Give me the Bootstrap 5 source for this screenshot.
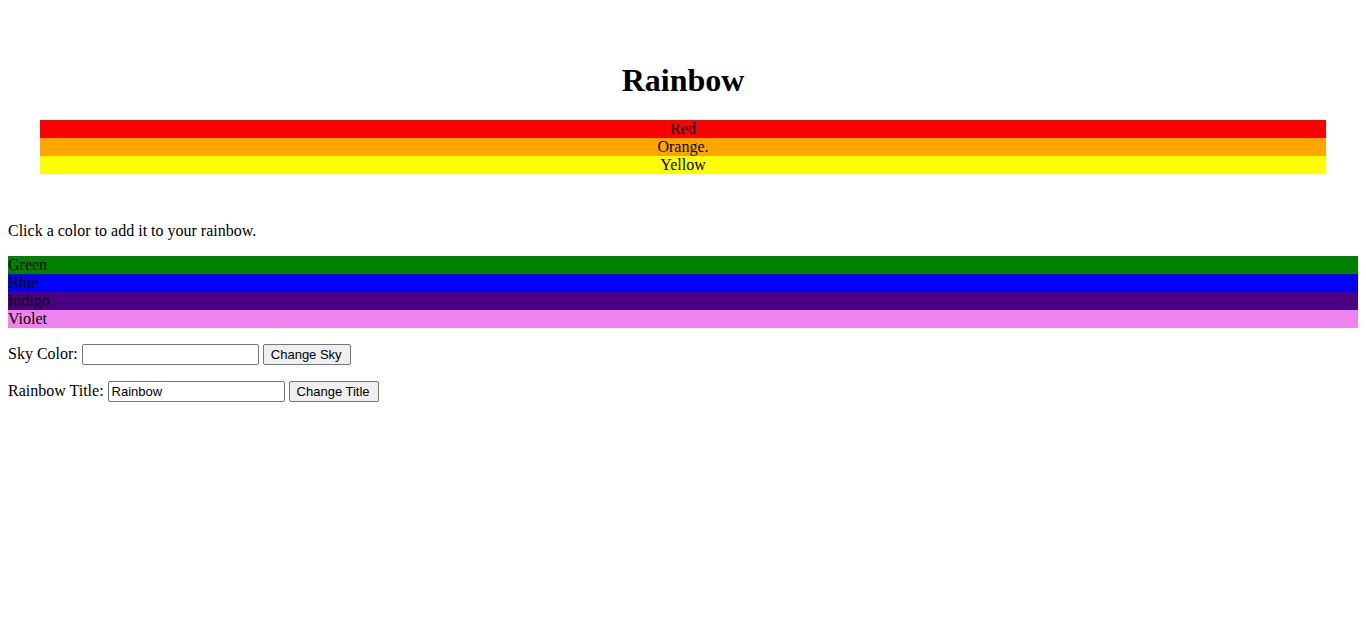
<!DOCTYPE html>
<html lang="en">
<head>
<meta charset="utf-8">
<meta name="viewport" content="width=device-width, initial-scale=1">
<title>Rainbow</title>
<link rel="stylesheet" href="https://cdn.jsdelivr.net/npm/bootstrap@5.3.0/dist/css/bootstrap.min.css">
<style>
  body { font-family: "Liberation Serif", "Times New Roman", serif; font-size: 16px; line-height: 18px; color: #000; background: #fff; }
  .sky { padding: 62px 40px 0; margin-bottom: 48px; }
  .sky h1 { font-size: 32px; line-height: 37px; margin-bottom: 21px; }
  .palette { margin: 0 8px 16px; }
  .intro { margin: 0 8px 16px; }
  .band { height: 18px; }
  .band-red { background: red; }
  .band-orange { background: orange; }
  .band-yellow { background: yellow; }
  .band-green { background: green; }
  .band-blue { background: blue; }
  .band-indigo { background: indigo; }
  .band-violet { background: violet; }
  .setting { margin: 0 8px 16px; }
  .setting input, .setting button { font-family: "Liberation Sans", Arial, sans-serif; font-size: 13px; line-height: 15px; height: 21px; color: #000; border: 1px solid #767676; border-radius: 2px; }
  .setting label { line-height: 20px; }
  .setting input { width: 177px; padding: 1px 3px; background: #fff; }
  .setting button { padding: 1px 8px 1px 7px; background: #efefef; }
</style>
</head>
<body>
<header class="sky text-center">
  <h1 class="fw-bold">Rainbow</h1>
  <ul class="list-unstyled mb-0">
    <li class="band band-red">Red</li>
    <li class="band band-orange">Orange.</li>
    <li class="band band-yellow">Yellow</li>
  </ul>
</header>
<main>
  <p class="intro">Click a color to add it to your rainbow.</p>
  <ul class="palette list-unstyled">
    <li class="band band-green">Green</li>
    <li class="band band-blue">Blue</li>
    <li class="band band-indigo">Indigo</li>
    <li class="band band-violet">Violet</li>
  </ul>
  <form class="setting d-flex align-items-start gap-1">
    <label for="sky-color">Sky Color:</label>
    <input type="text" id="sky-color">
    <button type="button">Change Sky</button>
  </form>
  <form class="setting d-flex align-items-start gap-1">
    <label for="rainbow-title">Rainbow Title:</label>
    <input type="text" id="rainbow-title" value="Rainbow">
    <button type="button">Change Title</button>
  </form>
</main>
<script src="https://cdn.jsdelivr.net/npm/bootstrap@5.3.0/dist/js/bootstrap.bundle.min.js"></script>
</body>
</html>
